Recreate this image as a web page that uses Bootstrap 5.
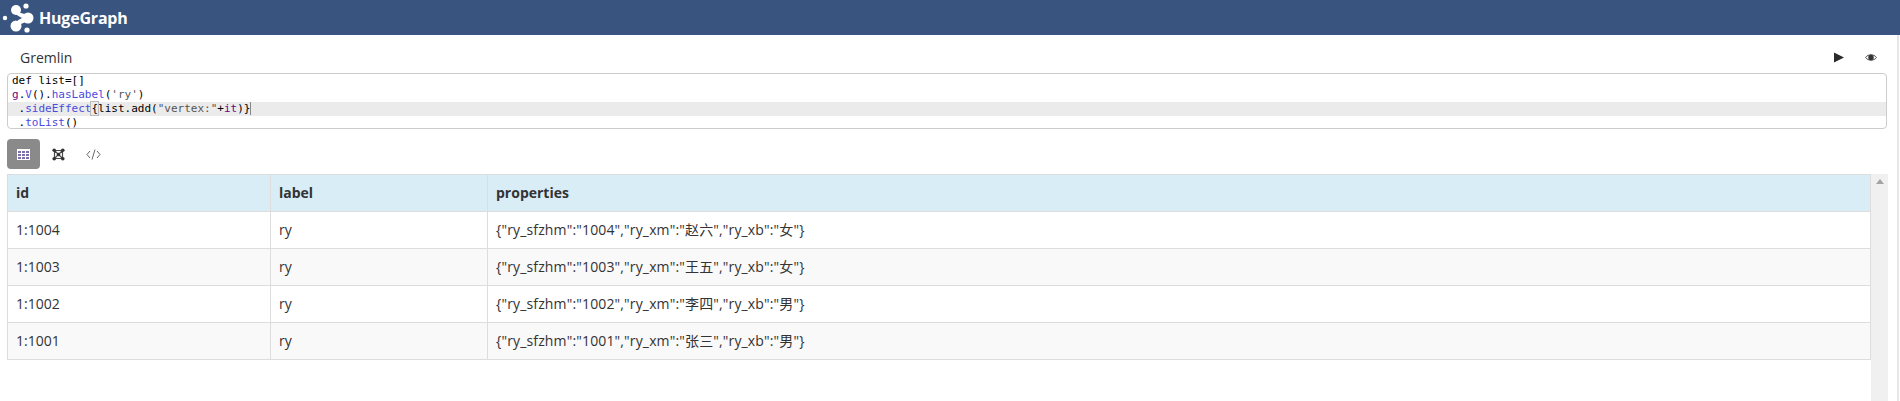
<!DOCTYPE html>
<html lang="zh">
<head>
  <meta charset="UTF-8" />
  <title>HugeGraph</title>
  <link href="https://cdn.jsdelivr.net/npm/bootstrap@5.3.0/dist/css/bootstrap.min.css" rel="stylesheet" />
  <style>
    html, body { height: 100%; overflow: hidden; }
    body { font-family: "Open Sans", "Noto Sans CJK SC", sans-serif; font-size: 14px; color: #333; background: #fff; }
    .hg-bar { height: 35px; background: #3a5480; padding: 0 0 0 1px; }
    .hg-brand { color: #fff; font-family: "Open Sans", sans-serif; font-weight: 700; font-size: 16px; letter-spacing: -.2px; margin-left: 4px; }
    .hg-main { border-right: 2px solid #e6e6e6; height: 366px; padding: 0 8px 0 7px; margin-right: 1px; overflow: hidden; }
    .hg-head { height: 38px; padding: 6px 0 0 13px; }
    .hg-title { font-size: 14px; }
    .hg-eye { margin-left: 21px; margin-right: 12px; }
    .hg-editor { height: 56px; border: 1px solid #ccc; border-radius: 4px; overflow: hidden; margin-right: 2px; font-family: "DejaVu Sans Mono", monospace; font-size: 11px; line-height: 14px; margin-bottom: 10px; }
    .hg-line { height: 14px; padding-left: 4px; white-space: pre; color: #000; }
    .hg-active { background: #ebebeb; }
    .hg-k { color: #708; }
    .hg-s { color: #555; }
    .hg-b { color: #4a4ae0; }
    .hg-match { outline: 1px solid #bbb; }
    .hg-cursor { border-right: 1px solid #888; }
    .hg-tabs { gap: 2px; height: 30px; margin-bottom: 5px; }
    .hg-tab { width: 33px; height: 30px; border-radius: 4px; }
    .hg-on { background: #8a8a8a; }
    .hg-table { width: 1864px; table-layout: fixed; margin: 0; --bs-table-border-color: #ddd; border-color: #ddd; }
    .hg-table th, .hg-table td { height: 37px; padding: 0 8px; vertical-align: middle; color: #333; font-size: 14px; line-height: 20px; }
    .hg-table thead th { background: #d9edf7; font-weight: 700; }
    .hg-table tbody tr:nth-child(even) td { background: #f9f9f9; }
    .hg-props { letter-spacing: .15px; }
    .hg-scroll { width: 17px; background: #f0f0f0; height: 227px; padding-top: 5px; }
    .hg-tri { width: 0; height: 0; border-left: 4px solid transparent; border-right: 4px solid transparent; border-bottom: 5px solid #a3a3a3; margin: 0 auto; }
  </style>
</head>
<body>
  <div class="hg-bar d-flex align-items-center">
    <svg width="34" height="33" viewBox="0 0 34 33">
      <g fill="#fff">
        <circle cx="4" cy="17" r="2.2" />
        <circle cx="25" cy="5" r="2.6" />
        <circle cx="26" cy="29" r="2.6" />
        <circle cx="15" cy="9" r="5" />
        <circle cx="15" cy="25" r="5.5" />
        <circle cx="27" cy="17" r="5.5" />
        <path d="M13 10 L27 14 L27 20 L13 26 L18 17 Z" />
      </g>
      <path d="M15.5 14 L21 17 L15.5 20 Z" fill="#3a5480" />
    </svg>
    <span class="hg-brand">HugeGraph</span>
  </div>

  <div class="hg-main">
    <div class="hg-head d-flex align-items-center justify-content-between">
      <span class="hg-title">Gremlin</span>
      <div class="d-flex align-items-center">
        <svg width="10" height="11" viewBox="0 0 10 11"><path d="M0 0.5 L10 5.5 L0 10.5 Z" fill="#2b2b2b" /></svg>
        <svg class="hg-eye" width="12" height="9" viewBox="0 0 13 10">
          <path d="M0.5 5 C3 1 10 1 12.5 5 C10 9 3 9 0.5 5 Z" fill="#fff" stroke="#333" stroke-width="1" />
          <circle cx="6.5" cy="5" r="3" fill="#333" />
        </svg>
      </div>
    </div>

    <div class="hg-editor">
      <div class="hg-line">def list=[]</div>
      <div class="hg-line"><span class="hg-k">g</span>.<span class="hg-b">V</span>().<span class="hg-b">hasLabel</span>(<span class="hg-s">'ry'</span>)</div>
      <div class="hg-line hg-active"> .<span class="hg-b">sideEffect</span><span class="hg-match">{</span>list.add(<span class="hg-s">"vertex:"</span>+<span class="hg-k">it</span>)<span class="hg-cursor">}</span></div>
      <div class="hg-line"> .<span class="hg-b">toList</span>()</div>
    </div>

    <div class="hg-tabs d-flex">
      <div class="hg-tab hg-on d-flex align-items-center justify-content-center">
        <svg width="13" height="11" viewBox="0 0 13 11">
          <rect width="13" height="11" fill="#fff" />
          <g fill="#7d6fa8">
            <rect x="1" y="2" width="3" height="2" /><rect x="5" y="2" width="3" height="2" /><rect x="9" y="2" width="3" height="2" />
            <rect x="1" y="5" width="3" height="2" /><rect x="5" y="5" width="3" height="2" /><rect x="9" y="5" width="3" height="2" />
            <rect x="1" y="8" width="3" height="2" /><rect x="5" y="8" width="3" height="2" /><rect x="9" y="8" width="3" height="2" />
          </g>
        </svg>
      </div>
      <div class="hg-tab d-flex align-items-center justify-content-center">
        <svg width="13" height="13" viewBox="0 0 13 13">
          <path d="M2.5 2.5 L10.5 10.5 M10.5 2.5 L2.5 10.5 M3 2.5 H10 M3 10.5 H10 M2.5 3 V10 M10.5 3 V10" stroke="#4a4a4a" stroke-width="1.2" fill="none" />
          <g fill="#333"><circle cx="2.2" cy="2.2" r="1.8" /><circle cx="10.8" cy="2.2" r="1.8" /><circle cx="2.2" cy="10.8" r="1.8" /><circle cx="10.8" cy="10.8" r="1.8" /><circle cx="6.5" cy="6.5" r="1.8" /></g>
        </svg>
      </div>
      <div class="hg-tab d-flex align-items-center justify-content-center">
        <svg width="15" height="11" viewBox="0 0 15 11" fill="none" stroke="#666" stroke-width="1">
          <path d="M4 2 L1 5.5 L4 9 M11 2 L14 5.5 L11 9 M9 0.5 L6 10.5" />
        </svg>
      </div>
    </div>

    <div class="d-flex align-items-start">
      <table class="table table-bordered hg-table">
        <colgroup><col style="width: 263px" /><col style="width: 217px" /><col /></colgroup>
        <thead>
          <tr><th>id</th><th>label</th><th>properties</th></tr>
        </thead>
        <tbody>
          <tr><td>1:1004</td><td>ry</td><td class="hg-props">{"ry_sfzhm":"1004","ry_xm":"赵六","ry_xb":"女"}</td></tr>
          <tr><td>1:1003</td><td>ry</td><td class="hg-props">{"ry_sfzhm":"1003","ry_xm":"王五","ry_xb":"女"}</td></tr>
          <tr><td>1:1002</td><td>ry</td><td class="hg-props">{"ry_sfzhm":"1002","ry_xm":"李四","ry_xb":"男"}</td></tr>
          <tr><td>1:1001</td><td>ry</td><td class="hg-props">{"ry_sfzhm":"1001","ry_xm":"张三","ry_xb":"男"}</td></tr>
        </tbody>
      </table>
      <div class="hg-scroll"><div class="hg-tri"></div></div>
    </div>
  </div>

  <script src="https://cdn.jsdelivr.net/npm/bootstrap@5.3.0/dist/js/bootstrap.bundle.min.js"></script>
</body>
</html>
